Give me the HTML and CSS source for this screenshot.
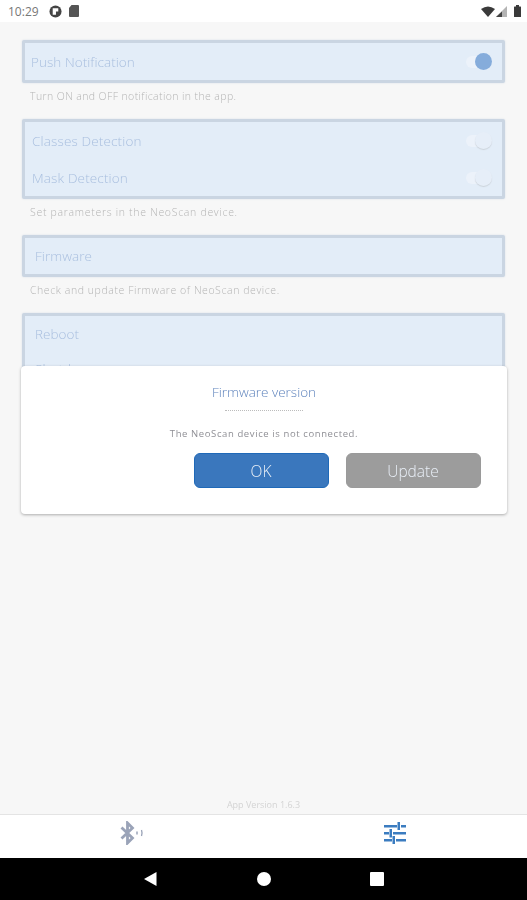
FILE: index.html
```html
<!DOCTYPE html>
<html lang="en">
<head>
    <meta charset="UTF-8">
    <meta name="viewport" content="width=device-width, initial-scale=1.0">
    <title>NeoScan settings</title>
    <link rel="stylesheet" href="styles.css">
</head>
<body>
    <div class="phone">
        <div class="status-bar">
            <span class="clock">10:29</span>
            <svg class="st-icon" width="13" height="13" viewBox="0 0 14 14"><circle cx="7" cy="7" r="6.500" fill="#444"/><path d="M4 3.500h6v3.500H7.500v3.500H4z" fill="#fff"/></svg>
            <svg class="st-icon" width="10" height="12" viewBox="0 0 10 12"><path d="M2.500 0H9a1 1 0 0 1 1 1v10a1 1 0 0 1-1 1H1a1 1 0 0 1-1-1V3z" fill="#555"/></svg>
            <div class="status-right">
                <svg width="14" height="11" viewBox="0 0 14 11"><path d="M0 3Q7-2 14 3L7 11z" fill="#3a3a3a"/></svg>
                <svg class="signal" width="11" height="11" viewBox="0 0 11 11"><path d="M11 0v11H0z" fill="#b4b4b4"/><path d="M6 5.500V11H0z" fill="#444"/></svg>
                <svg width="7" height="12" viewBox="0 0 7 12"><path d="M2 0h3v1.500h1.500a.5.5 0 0 1 .5.5v9.500a.5.5 0 0 1-.5.5H.5a.5.5 0 0 1-.5-.5V2a.5.5 0 0 1 .5-.5H2z" fill="#3a3a3a"/></svg>
            </div>
        </div>

        <div class="content">
            <div class="card">
                <div class="row">
                    <span class="label">Push Notification</span>
                    <span class="switch on"></span>
                </div>
            </div>
            <p class="hint">Turn ON and OFF notification in the app.</p>

            <div class="card">
                <div class="row">
                    <span class="label label-wide">Classes Detection</span>
                    <span class="switch"></span>
                </div>
                <div class="row">
                    <span class="label label-wide">Mask Detection</span>
                    <span class="switch"></span>
                </div>
            </div>
            <p class="hint hint-wide">Set parameters in the NeoScan device.</p>

            <div class="card">
                <div class="row indent">
                    <span class="label">Firmware</span>
                </div>
            </div>
            <p class="hint hint-mid">Check and update Firmware of NeoScan device.</p>

            <div class="card">
                <div class="row indent">
                    <span class="label">Reboot</span>
                </div>
                <div class="row row-last indent">
                    <span class="label">Shutdown</span>
                </div>
            </div>

            <p class="version">App Version 1.6.3</p>
        </div>

        <div class="tabs">
            <div class="tab">
                <svg width="24" height="24" viewBox="0 0 24 24" fill="none" stroke="#9aa3b8" stroke-width="2.800"><path d="M1.500 6.500L12.500 17 7.500 22V2l5 5-11 10.500"/><path d="M17 10.500v3" stroke-width="1.500"/><path d="M21.500 9c.7 2 .7 4 0 6" stroke-width="1.300"/></svg>
            </div>
            <div class="tab">
                <svg width="24" height="24" viewBox="0 0 24 24" fill="#3b7cc0"><path d="M1 4h13v2.500H1zM18 4h5v2.500h-5zM14.500 1H17v8h-2.500zM1 11h5v2.500H1zM10 11h13v2.500H10zM6.500 8H9v8.500H6.500zM1 18h8v2.500H1zM13 18h10v2.500H13zM9.500 15H12v8H9.500z"/></svg>
            </div>
        </div>

        <div class="nav-bar">
            <svg width="16" height="16" viewBox="0 0 16 16"><path d="M13.500 1v14L1 8z" fill="#fff"/></svg>
            <svg width="16" height="16" viewBox="0 0 16 16"><circle cx="8" cy="8" r="7" fill="#fff"/></svg>
            <svg width="16" height="16" viewBox="0 0 16 16"><rect x="1" y="1" width="14" height="14" rx="1" fill="#fff"/></svg>
        </div>

        <div class="dialog">
            <h2 class="dialog-title">Firmware version</h2>
            <div class="dialog-rule"></div>
            <p class="dialog-msg">The NeoScan device is not connected.</p>
            <div class="dialog-actions">
                <button class="btn btn-ok">OK</button>
                <button class="btn btn-update">Update</button>
            </div>
        </div>
    </div>
</body>
</html>
```

FILE: styles.css
```css
body {
    margin: 0;
    font-family: "Open Sans", "Liberation Sans", sans-serif;
    background-color: #f7f7f7;
}
.phone {
    position: relative;
    display: flex;
    flex-direction: column;
    height: 900px;
    overflow: hidden;
    filter: blur(0.4px);
}
.status-bar {
    display: flex;
    align-items: center;
    gap: 7px;
    height: 22px;
    padding: 0 6px 0 8px;
    background-color: #fff;
    color: #777;
    font-size: 12px;
}
.clock {
    margin-right: 3px;
}
.status-right {
    display: flex;
    align-items: center;
    gap: 1px;
    margin-left: auto;
}
.signal {
    margin-right: 6px;
}
.content {
    flex: 1;
    display: flex;
    flex-direction: column;
    padding: 18px 22px 0 22px;
}
.card {
    padding: 0 6px;
    background-color: #e3edf8;
    border: 3px solid #cad5e2;
    border-radius: 2px;
    box-shadow: 0 0 2px #d5dde6;
}
.row {
    display: flex;
    align-items: center;
    justify-content: space-between;
    height: 37px;
}
.indent {
    padding-left: 4px;
    height: 36px;
}
.row-last {
    box-sizing: border-box;
    height: 37px;
    padding-bottom: 4px;
}
.label {
    font-size: 13.500px;
    font-weight: 300;
    letter-spacing: 0.05px;
    color: #a9bfdf;
}
.label-wide {
    margin-left: 1px;
    letter-spacing: 0.15px;
}
.hint {
    margin: 6px 0 16px 8px;
    font-size: 10.500px;
    font-weight: 300;
    letter-spacing: 0.4px;
    color: #b5b5b5;
    line-height: 14px;
}
.hint-wide {
    letter-spacing: 0.7px;
}
.hint-mid {
    letter-spacing: 0.58px;
}
.switch {
    position: relative;
    width: 26px;
    height: 12px;
    margin-right: 4px;
    border-radius: 6px;
    background-color: #ecf2fa;
}
.switch::after {
    content: "";
    position: absolute;
    top: -3px;
    right: 0;
    width: 17px;
    height: 17px;
    border-radius: 50%;
    background-color: #e6eef8;
    box-shadow: 0 1px 1px #ccd3db;
}
.switch.on::after {
    top: -3px;
    background-color: #85acdb;
    box-shadow: none;
}
.version {
    margin: auto 0 3px;
    text-align: center;
    font-size: 9px;
    color: #d4d4d4;
}
.tabs {
    display: flex;
    height: 43px;
    background-color: #fff;
    border-top: 1px solid #e4e4e4;
}
.tab {
    flex: 1;
    display: flex;
    align-items: center;
    justify-content: center;
    padding-bottom: 8px;
}
.nav-bar {
    display: flex;
    align-items: center;
    justify-content: center;
    gap: 97px;
    height: 42px;
    background-color: #000;
}
.dialog {
    position: absolute;
    top: 366px;
    left: 21px;
    width: 486px;
    height: 148px;
    box-sizing: border-box;
    padding-top: 18px;
    text-align: center;
    background-color: #fff;
    border-radius: 4px;
    box-shadow: 0 1px 3px rgba(0, 0, 0, 0.3);
}
.dialog-title {
    margin: 0;
    font-size: 13.500px;
    font-weight: 300;
    line-height: 16px;
    color: #5f84bd;
}
.dialog-rule {
    width: 78px;
    margin: 10px auto 0;
    border-top: 1px dotted #bcbcbc;
}
.dialog-msg {
    margin: 16px 0 0;
    font-size: 9.500px;
    letter-spacing: 0.6px;
    line-height: 14px;
    color: #8f8f95;
}
.dialog-actions {
    display: flex;
    justify-content: flex-end;
    gap: 17px;
    margin-top: 12px;
    padding-right: 26.500px;
}
.btn {
    width: 135px;
    height: 35px;
    padding: 0;
    font-family: inherit;
    font-size: 15.500px;
    font-weight: 300;
    color: #e9eff7;
    border: 1px solid #9a9a9a;
    border-radius: 6px;
}
.btn-ok {
    background-color: #3a77bd;
    border-color: #1f69b8;
}
.btn-update {
    background-color: #9c9c9c;
}
```
